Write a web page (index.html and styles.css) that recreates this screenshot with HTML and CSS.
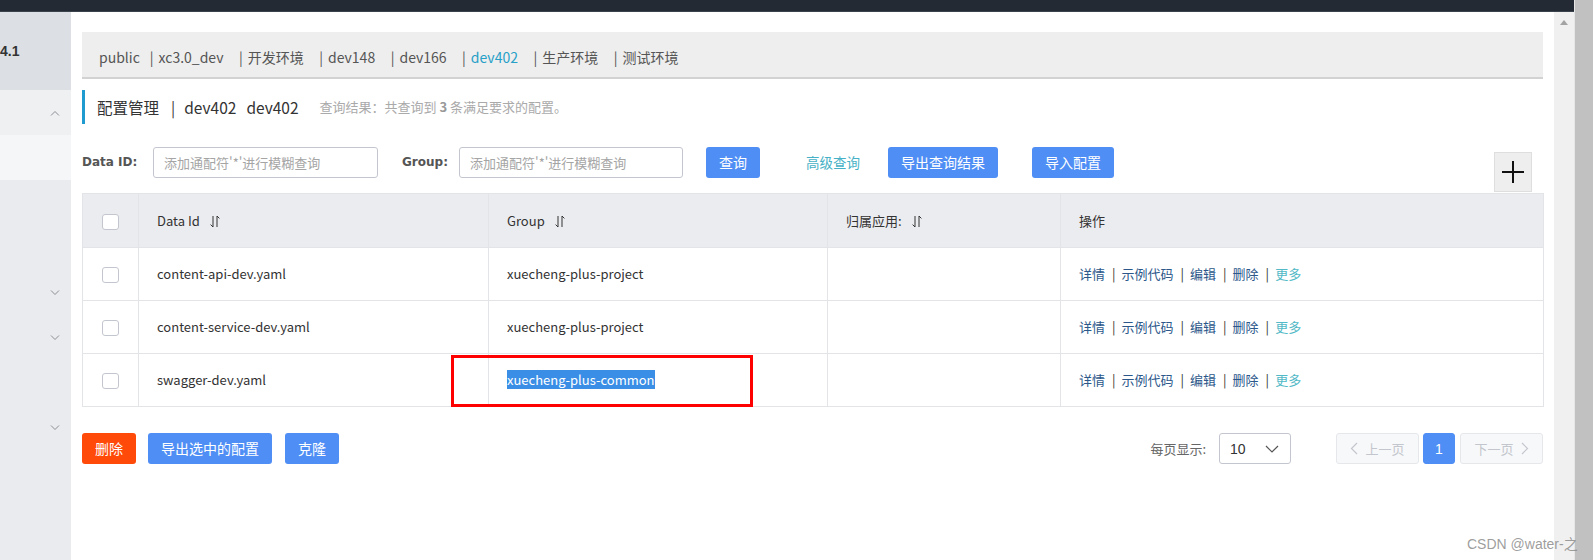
FILE: index.html
```html
<!DOCTYPE html>
<html lang="zh-CN">
<head>
<meta charset="utf-8">
<title>配置管理</title>
<link rel="stylesheet" href="styles.css">
</head>
<body>
<div class="screen">
  <div class="main-col">
    <div class="topbar"></div>
    <div class="app">
      <aside class="sidebar">
        <div class="side-brand">4.1</div>
        <div class="side-item side-open">
          <svg class="chev" width="10" height="6" viewBox="0 0 10 6"><path d="M1 5.5L5 1.5L9 5.5"/></svg>
        </div>
        <div class="side-item side-active"></div>
        <div class="side-item"></div>
        <div class="side-item"></div>
        <div class="side-item">
          <svg class="chev" width="10" height="6" viewBox="0 0 10 6"><path d="M1 0.5L5 4.5L9 0.5"/></svg>
        </div>
        <div class="side-item">
          <svg class="chev" width="10" height="6" viewBox="0 0 10 6"><path d="M1 0.5L5 4.5L9 0.5"/></svg>
        </div>
        <div class="side-item"></div>
        <div class="side-item">
          <svg class="chev" width="10" height="6" viewBox="0 0 10 6"><path d="M1 0.5L5 4.5L9 0.5"/></svg>
        </div>
      </aside>

      <main class="page">
        <div class="ns-bar">
          <span class="ns-item ns-first">public</span>
          <span class="ns-sep">|</span><span class="ns-item">xc3.0_dev</span>
          <span class="ns-sep">|</span><span class="ns-item">开发环境</span>
          <span class="ns-sep">|</span><span class="ns-item">dev148</span>
          <span class="ns-sep">|</span><span class="ns-item">dev166</span>
          <span class="ns-sep">|</span><span class="ns-item ns-active">dev402</span>
          <span class="ns-sep">|</span><span class="ns-item">生产环境</span>
          <span class="ns-sep">|</span><span class="ns-item">测试环境</span>
        </div>

        <div class="title-row">
          <span class="title-main">配置管理</span>
          <span class="title-sep">|</span>
          <span class="title-ns">dev402</span>
          <span class="title-ns2">dev402</span>
          <span class="title-desc">查询结果：共查询到 <strong>3</strong> 条满足要求的配置。</span>
        </div>

        <div class="search-row">
          <label class="search-label label-id">Data ID:</label>
          <input class="search-input input-id" type="text" placeholder="添加通配符'*'进行模糊查询">
          <label class="search-label label-group">Group:</label>
          <input class="search-input input-group" type="text" placeholder="添加通配符'*'进行模糊查询">
          <button class="btn btn-primary btn-query">查询</button>
          <a class="adv-link">高级查询</a>
          <button class="btn btn-primary btn-export">导出查询结果</button>
          <button class="btn btn-primary btn-import">导入配置</button>
          <button class="add-btn" aria-label="新增">
            <svg width="22" height="22" viewBox="0 0 22 22"><path d="M11 0V22M0 11H22"/></svg>
          </button>
        </div>

        <div class="table-wrap">
          <table class="cfg-table">
            <colgroup>
              <col class="c-check"><col class="c-id"><col class="c-group"><col class="c-app"><col class="c-op">
            </colgroup>
            <thead>
              <tr>
                <th class="cell-check"><span class="checkbox"></span></th>
                <th>Data Id <svg class="sort" width="10" height="13" viewBox="0 0 10 13"><path d="M3 1V12L0.6 9.6M7 12V1L9.4 3.4"/></svg></th>
                <th>Group <svg class="sort" width="10" height="13" viewBox="0 0 10 13"><path d="M3 1V12L0.6 9.6M7 12V1L9.4 3.4"/></svg></th>
                <th>归属应用: <svg class="sort" width="10" height="13" viewBox="0 0 10 13"><path d="M3 1V12L0.6 9.6M7 12V1L9.4 3.4"/></svg></th>
                <th>操作</th>
              </tr>
            </thead>
            <tbody>
              <tr>
                <td class="cell-check"><span class="checkbox"></span></td>
                <td>content-api-dev.yaml</td>
                <td>xuecheng-plus-project</td>
                <td></td>
                <td class="ops"><a>详情</a><span class="op-sep">|</span><a>示例代码</a><span class="op-sep">|</span><a>编辑</a><span class="op-sep">|</span><a>删除</a><span class="op-sep">|</span><a class="more">更多</a></td>
              </tr>
              <tr>
                <td class="cell-check"><span class="checkbox"></span></td>
                <td>content-service-dev.yaml</td>
                <td>xuecheng-plus-project</td>
                <td></td>
                <td class="ops"><a>详情</a><span class="op-sep">|</span><a>示例代码</a><span class="op-sep">|</span><a>编辑</a><span class="op-sep">|</span><a>删除</a><span class="op-sep">|</span><a class="more">更多</a></td>
              </tr>
              <tr>
                <td class="cell-check"><span class="checkbox"></span></td>
                <td>swagger-dev.yaml</td>
                <td><span class="selected">xuecheng-plus-common</span></td>
                <td></td>
                <td class="ops"><a>详情</a><span class="op-sep">|</span><a>示例代码</a><span class="op-sep">|</span><a>编辑</a><span class="op-sep">|</span><a>删除</a><span class="op-sep">|</span><a class="more">更多</a></td>
              </tr>
            </tbody>
          </table>
          <div class="annot"></div>
        </div>

        <div class="footer-row">
          <button class="btn btn-danger btn-del">删除</button>
          <button class="btn btn-primary btn-export-sel">导出选中的配置</button>
          <button class="btn btn-primary btn-clone">克隆</button>
          <div class="pager">
            <span class="pager-label">每页显示:</span>
            <div class="page-size">
              <span>10</span>
              <svg width="14" height="8" viewBox="0 0 14 8"><path d="M1 1L7 7L13 1"/></svg>
            </div>
            <button class="pg-btn pg-prev"><svg width="8" height="13" viewBox="0 0 8 13"><path d="M7 1L1.5 6.5L7 12"/></svg><span>上一页</span></button>
            <button class="pg-btn pg-cur">1</button>
            <button class="pg-btn pg-next"><span>下一页</span><svg width="8" height="13" viewBox="0 0 8 13"><path d="M1 1L6.5 6.5L1 12"/></svg></button>
          </div>
        </div>
      </main>

      <div class="inner-scroll"><span class="scroll-arrow"></span></div>
    </div>
  </div>
  <div class="outer-scroll"></div>
  <div class="watermark">CSDN @water-之</div>
</div>
</body>
</html>
```
FILE: styles.css
```css
* { box-sizing: border-box; }
html, body { margin: 0; padding: 0; }
body {
  width: 1593px;
  height: 560px;
  overflow: hidden;
  background: #fff;
  color: #333;
  font-family: "Noto Sans CJK SC", "Noto Sans", sans-serif;
}
.screen { display: flex; height: 560px; position: relative; }
.main-col { width: 1574px; flex: none; display: flex; flex-direction: column; }
.topbar { height: 12px; background: #232a33; flex: none; border-bottom: 1px solid #3a424c; }
.app { flex: 1; display: flex; min-height: 0; }

/* sidebar */
.sidebar { width: 71px; flex: none; background: #e9ebee; display: flex; flex-direction: column; }
.side-brand {
  height: 78px;
  background: #dcdfe3;
  font: bold 14px/78px "Liberation Sans", sans-serif;
  color: #333;
}
.side-item { height: 45px; display: flex; align-items: center; justify-content: flex-end; padding-right: 11px; }
.side-open { background: #eef0f2; }
.side-active { background: #f5f6f8; }
.chev path { fill: none; stroke: #8a8d93; stroke-width: 1; }

/* page */
.page { flex: 1; min-width: 0; padding: 20px 11px 0; position: relative; background: #fff; }
.inner-scroll { width: 20px; flex: none; background: #f0f0f0; position: relative; }
.scroll-arrow {
  position: absolute; left: 6px; top: 8px;
  width: 0; height: 0;
  border-left: 4px solid transparent; border-right: 4px solid transparent;
  border-bottom: 5px solid #a3a3a3;
}
.outer-scroll { flex: 1; background: #c1c1c1; border-left: 1px solid #e6e6e6; }

/* namespace bar */
.ns-bar {
  height: 47px;
  background: #eeeeee;
  border-bottom: 2px solid #d2d2d2;
  padding: 4px 0 0 17px;
  display: flex;
  align-items: center;
  font-size: 14px;
  line-height: 20px;
  color: #555;
}
.ns-item { margin-right: 15.5px; }
.ns-first { margin-right: 10px; }
.ns-sep { margin-right: 5px; color: #555; }
.ns-active { color: #27a0c8; }

/* title */
.title-row {
  margin-top: 11px;
  height: 34px;
  border-left: 3px solid #1f9bcf;
  padding-left: 12px;
  display: flex;
  align-items: center;
  font-size: 15.5px;
  line-height: 22px;
  color: #333;
}
.title-sep { margin: 0 9px 0 12px; }
.title-ns { margin-right: 10px; }
.title-desc { margin-left: 21px; font-size: 13px; color: #aaa; }
.title-desc strong { font-weight: bold; color: #999; }

/* search */
.search-row { margin-top: 23px; display: flex; align-items: flex-start; }
.search-label {
  height: 31px;
  font: bold 12px/31px "DejaVu Sans", sans-serif;
  color: #555;
  white-space: nowrap;
}
.label-id { width: 71px; }
.label-group { width: 57px; margin-left: 24px; }
.search-input {
  height: 31px;
  width: 225px;
  border: 1px solid #c4c6cf;
  border-radius: 3px;
  padding: 0 10px;
  font-family: "Noto Sans CJK SC", sans-serif;
  font-size: 13px;
  color: #333;
  background: #fff;
  outline: none;
}
.search-input::placeholder { color: #a5a5a5; }
.input-group { width: 224px; }
.btn {
  height: 31px;
  border: none;
  border-radius: 3px;
  padding: 0 13px;
  font-family: "Noto Sans CJK SC", sans-serif;
  font-size: 14px;
  line-height: 31px;
  color: #fff;
  cursor: pointer;
}
.btn-primary { background: #4f8ef5; }
.btn-danger { background: #ff4a0a; }
.btn-query { margin-left: 23px; }
.adv-link {
  margin-left: 46px;
  font-size: 13.5px;
  line-height: 31px;
  color: #46b1c6;
}
.btn-export { margin-left: 28px; }
.btn-import { margin-left: 34px; }
.add-btn {
  margin-left: auto;
  margin-right: 11px;
  margin-top: 5px;
  width: 38px;
  height: 40px;
  background: #eeeeee;
  border: 1px solid #dedede;
  padding: 0;
  display: flex;
  align-items: center;
  justify-content: center;
}
.add-btn path { stroke: #111; stroke-width: 2; fill: none; }

/* table */
.table-wrap { margin-top: 1px; position: relative; }
.cfg-table {
  width: 100%;
  table-layout: fixed;
  border-collapse: collapse;
  border: 1px solid #dcdee3;
  font-size: 13px;
  line-height: 18px;
  color: #333;
}
.c-check { width: 56px; }
.c-id { width: 350px; }
.c-group { width: 339px; }
.c-app { width: 233px; }
.c-op { width: 483px; }
.cfg-table th, .cfg-table td {
  border: 1px solid #e3e4e8;
  padding: 0 18px;
  text-align: left;
  font-weight: normal;
  white-space: nowrap;
}
.cfg-table thead tr { height: 54px; background: #ebecf0; }
.cfg-table tbody tr { height: 53px; }
.cfg-table .cell-check { padding: 0; text-align: center; }
.checkbox {
  display: inline-block;
  width: 17px;
  height: 16px;
  border: 1px solid #c4c6cf;
  border-radius: 3px;
  background: #fff;
  vertical-align: middle;
}
.sort { margin-left: 7px; vertical-align: -2px; }
.sort path { fill: none; stroke: #333; stroke-width: 1; }
.ops a { color: #2b578a; }
.ops a.more { color: #52b9c6; }
.op-sep { margin: 0 6px 0 7px; color: #333; }
.selected { background: #3a8ee6; color: #fff; }
.annot {
  position: absolute;
  left: 369px;
  top: 162px;
  width: 302px;
  height: 52px;
  border: 3px solid #ff0000;
  pointer-events: none;
}

/* footer */
.footer-row { margin-top: 26px; display: flex; align-items: center; }
.btn-export-sel { margin-left: 12px; }
.btn-clone { margin-left: 13px; }
.pager { margin-left: auto; display: flex; align-items: center; }
.pager-label { font-size: 13px; color: #666; margin-right: 13px; }
.page-size {
  width: 72px;
  height: 31px;
  border: 1px solid #c4c6cf;
  border-radius: 3px;
  display: flex;
  align-items: center;
  justify-content: space-between;
  padding: 0 11px 0 10px;
  font: 14px "Liberation Sans", sans-serif;
  color: #333;
}
.page-size path { fill: none; stroke: #555; stroke-width: 1.2; }
.pg-btn {
  height: 31px;
  border-radius: 3px;
  border: 1px solid #e6e7eb;
  background: #f7f8fa;
  color: #c3c6cc;
  font-family: "Noto Sans CJK SC", sans-serif;
  font-size: 13px;
  display: flex;
  align-items: center;
  justify-content: center;
  gap: 7px;
  padding: 0;
}
.pg-btn path { fill: none; stroke: #c3c6cc; stroke-width: 1.2; }
.pg-prev { width: 83px; margin-left: 45px; }
.pg-cur { width: 32px; margin-left: 4px; background: #4f8ef5; border-color: #4f8ef5; color: #fff; font: 14px "Liberation Sans", sans-serif; }
.pg-next { width: 83px; margin-left: 5px; }

.watermark {
  position: absolute;
  left: 1467px;
  top: 535px;
  font: 14px/18px "Liberation Sans", "Noto Sans CJK SC", sans-serif;
  color: rgba(140, 140, 140, 0.85);
  white-space: nowrap;
}
```
